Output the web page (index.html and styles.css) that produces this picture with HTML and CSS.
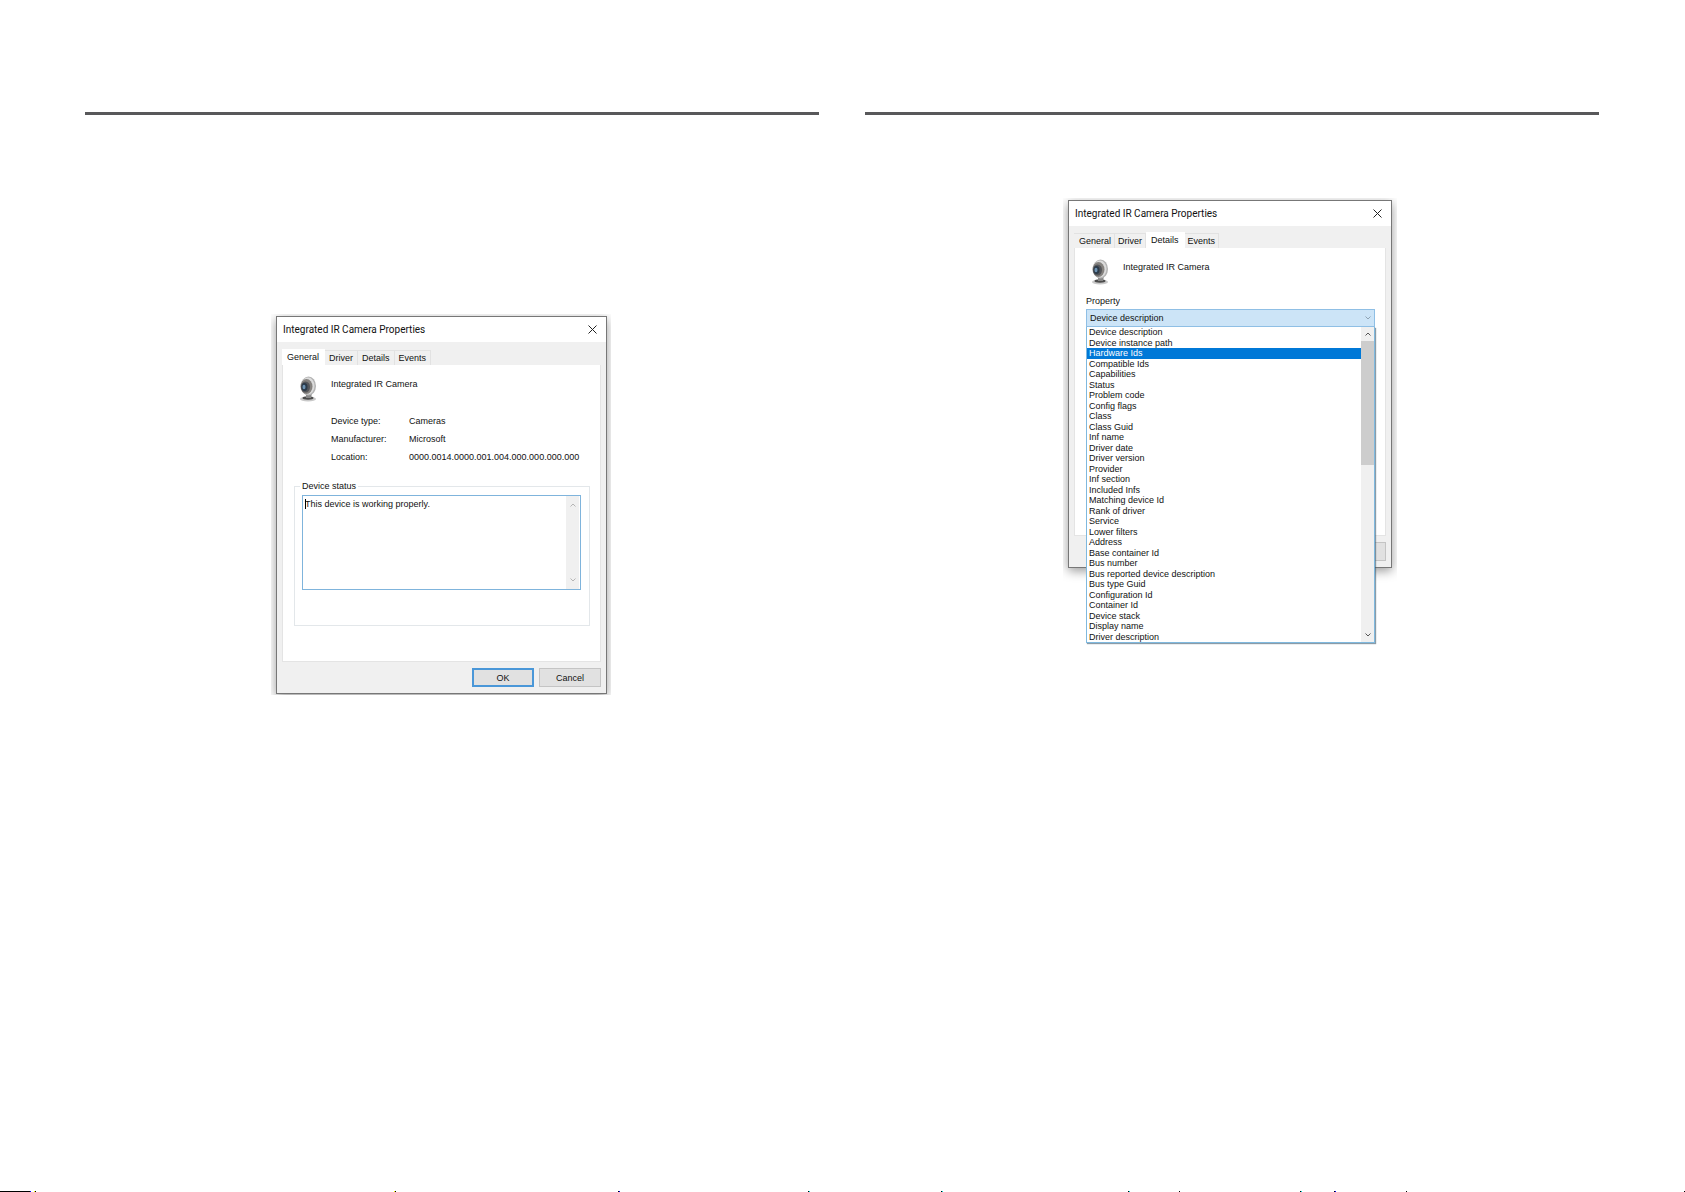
FILE: index.html
```
<!DOCTYPE html>
<html lang="en">
<head>
  <meta charset="utf-8">
  <title>Integrated IR Camera Properties</title>
  <link rel="stylesheet" href="styles.css">
</head>
<body>
<!-- one camera drawing, used in both dialogs -->
<svg class="defs" width="0" height="0" aria-hidden="true">
  <symbol id="camera" viewBox="0 0 18 26">
    <ellipse cx="9" cy="23" rx="8" ry="2.5" fill="#c9c9c9"/>
    <ellipse cx="9" cy="22" rx="5.5" ry="1.7" fill="#4c4c4c"/>
    <path d="M7 17h6l-1 5H7z" fill="#888"/>
    <ellipse cx="9.5" cy="10" rx="7.500" ry="9.5" fill="#b4b4b4"/>
    <ellipse cx="9" cy="10" rx="6.500" ry="8.500" fill="#dcdcdc"/>
    <ellipse cx="7.500" cy="10.500" rx="6" ry="7.500" fill="#85827f"/>
    <ellipse cx="6.500" cy="11" rx="4.500" ry="5.500" fill="#55565a"/>
    <ellipse cx="5.500" cy="11" rx="3" ry="4" fill="#2c3b4a"/>
    <ellipse cx="5" cy="11" rx="1.500" ry="2.200" fill="#6f93b2"/>
  </symbol>
  <symbol id="close" viewBox="0 0 9 9">
    <path d="M.5.5l8 8M8.500.5l-8 8" fill="none" stroke="#222" stroke-width="1"/>
  </symbol>
  <symbol id="up" viewBox="0 0 6 4">
    <path d="M.5 3.500L3 1l2.500 2.500" fill="none" stroke="currentColor"/>
  </symbol>
  <symbol id="down" viewBox="0 0 6 4">
    <path d="M.5.5L3 3 5.500.5" fill="none" stroke="currentColor"/>
  </symbol>
</svg>

<main class="spread">
  <section class="page">
    <div class="figure figure-general">
      <div class="dialog">
        <header class="titlebar">
          <h2>Integrated IR Camera Properties</h2>
          <button class="close" aria-label="Close"><svg><use href="#close"/></svg></button>
        </header>
        <nav class="tabs">
          <button class="tab active">General</button>
          <button class="tab">Driver</button>
          <button class="tab">Details</button>
          <button class="tab">Events</button>
        </nav>
        <div class="panel">
          <div class="device">
            <svg class="camera"><use href="#camera"/></svg>
            <span>Integrated IR Camera</span>
          </div>
          <dl class="info">
            <dt>Device type:</dt><dd>Cameras</dd>
            <dt>Manufacturer:</dt><dd>Microsoft</dd>
            <dt>Location:</dt><dd>0000.0014.0000.001.004.000.000.000.000</dd>
          </dl>
          <fieldset class="status">
            <legend><label for="status">Device status</label></legend>
            <div class="status-box">
              <textarea id="status" readonly>This device is working properly.</textarea>
              <span class="caret"></span>
              <div class="scrollbar disabled">
                <svg><use href="#up"/></svg>
                <svg><use href="#down"/></svg>
              </div>
            </div>
          </fieldset>
        </div>
        <footer class="actions">
          <button class="btn default">OK</button>
          <button class="btn">Cancel</button>
        </footer>
      </div>
    </div>
  </section>

  <section class="page">
    <div class="figure figure-details">
      <div class="dialog">
        <header class="titlebar">
          <h2>Integrated IR Camera Properties</h2>
          <button class="close" aria-label="Close"><svg><use href="#close"/></svg></button>
        </header>
        <nav class="tabs">
          <button class="tab">General</button>
          <button class="tab">Driver</button>
          <button class="tab active">Details</button>
          <button class="tab">Events</button>
        </nav>
        <div class="panel">
          <div class="device">
            <svg class="camera"><use href="#camera"/></svg>
            <span>Integrated IR Camera</span>
          </div>
          <label class="property-label" for="property">Property</label>
          <div class="combo">
            <select id="property">
              <option>Device description</option>
            </select>
            <svg class="combo-arrow"><use href="#down"/></svg>
            <!-- opened drop-down -->
            <div class="dropdown">
              <ul role="listbox" aria-label="Property">
                <li role="option">Device description</li>
                <li role="option">Device instance path</li>
                <li role="option" class="selected" aria-selected="true">Hardware Ids</li>
                <li role="option">Compatible Ids</li>
                <li role="option">Capabilities</li>
                <li role="option">Status</li>
                <li role="option">Problem code</li>
                <li role="option">Config flags</li>
                <li role="option">Class</li>
                <li role="option">Class Guid</li>
                <li role="option">Inf name</li>
                <li role="option">Driver date</li>
                <li role="option">Driver version</li>
                <li role="option">Provider</li>
                <li role="option">Inf section</li>
                <li role="option">Included Infs</li>
                <li role="option">Matching device Id</li>
                <li role="option">Rank of driver</li>
                <li role="option">Service</li>
                <li role="option">Lower filters</li>
                <li role="option">Address</li>
                <li role="option">Base container Id</li>
                <li role="option">Bus number</li>
                <li role="option">Bus reported device description</li>
                <li role="option">Bus type Guid</li>
                <li role="option">Configuration Id</li>
                <li role="option">Container Id</li>
                <li role="option">Device stack</li>
                <li role="option">Display name</li>
                <li role="option">Driver description</li>
              </ul>
              <div class="scrollbar">
                <svg><use href="#up"/></svg>
                <span class="thumb"></span>
                <svg><use href="#down"/></svg>
              </div>
            </div>
          </div>
          <div class="value-box"></div>
        </div>
        <footer class="actions">
          <button class="btn" aria-label="Cancel"></button>
        </footer>
      </div>
    </div>
  </section>
</main>

<!-- trim line and ticks along the bottom of the sheet -->
<svg class="edge" viewBox="0 0 1685 1" preserveAspectRatio="none" aria-hidden="true">
  <path d="M0 0h30v1H0zM35 0h1v1h-1zM395 0h1v1h-1zM618 0h1v1h-1zM808 0h1v1h-1zM941 0h1v1h-1zM1128 0h1v1h-1zM1179 0h1v1h-1zM1300 0h1v1h-1zM1334 0h1v1h-1zM1406 0h1v1h-1zM1684 0h1v1h-1z"/>
  <path d="M30 0h1v1h-1zM619 0h1v1h-1zM1335 0h1v1h-1z" fill="#00f"/>
  <path d="M34 0h1v1h-1zM394 0h1v1h-1z" fill="#ff0"/>
  <path d="M809 0h1v1h-1zM942 0h1v1h-1zM1129 0h1v1h-1zM1301 0h1v1h-1z" fill="#0dd"/>
</svg>
</body>
</html>
```
FILE: styles.css
```
*{
  box-sizing: border-box;
}

body{
  margin: 0;
  min-height: 100vh;
  display: flex;
  flex-direction: column;
  background: #fff;
  color: #111;
  font: 9px/12px "Liberation Sans", Arial, sans-serif;
}

button,
select,
textarea{
  font: inherit;
  color: inherit;
  border-radius: 0;
}

.defs{
  position: absolute;
}

/* Two facing pages */
.spread{
  flex: 1;
  display: grid;
  grid-template-columns: 1fr 1fr;
  gap: 46px;
  padding: 112px 86px 0 85px;
}
.page{
  border-top: 3px solid #58585a;
}

/* The figures cut the dialog shadow off at their edge */
.figure{
  overflow: hidden;
}
.figure-general{
  width: 340px;
  margin: 199px 0 0 186px;
  padding: 2px 4px 1px 5px;
}
.figure-details{
  width: 334px;
  margin: 83px 0 0 198px;
  padding: 2px 5px 90px;
}

.dialog{
  display: flex;
  flex-direction: column;
  background: #f0f0f0;
  border: 1px solid #777;
  box-shadow: 0 3px 10px rgba(0,0,0,0.4);
}
.figure-general .dialog{
  height: 378px;
}
.figure-details .dialog{
  height: 368px;
}

.titlebar{
  display: flex;
  align-items: center;
  justify-content: space-between;
  height: 25px;
  padding: 0 9px 0 6px;
  background: #fff;
}
.titlebar h2{
  margin: 0;
  font: 10px/14px Roboto, "Open Sans", sans-serif;
}
.close{
  display: flex;
  padding: 0;
  border: 0;
  background: none;
}
.close svg{
  width: 9px;
  height: 9px;
}

/* Tabs */
.tabs{
  display: flex;
  align-items: flex-end;
  margin-top: 7px;
  padding: 0 5px;
}
.figure-details .tabs{
  margin-top: 6px;
}
.tab{
  height: 15px;
  padding: 0 4px;
  border: 1px solid #e2e2e2;
  border-width: 1px 1px 0 0;
  background: #f0f0f0;
  line-height: 14px;
}
.figure-details .tab{
  padding: 0 3px;
}
.figure-details .tab:first-child{
  padding-left: 5px;
}
.tab.active,
.figure-details .tab.active{
  height: 16px;
  padding: 0 5px 2px;
  background: #fff;
  border-color: #fff;
}

.panel{
  flex: 1;
  margin: 0 5px;
  padding: 11px 10px 0 11px;
  border: 1px solid #e4e4e4;
  border-top: 0;
  background: #fff;
}
.device{
  display: flex;
  gap: 14px;
  padding-left: 5px;
}
.device span{
  padding-top: 2px;
}
.camera{
  width: 18px;
  height: 26px;
}

.info{
  display: grid;
  grid-template-columns: 78px auto;
  line-height: 18px;
  margin: 10px 0 0 37px;
}
.info dd{
  margin: 0;
}

.status{
  margin: 14px 0 0;
  padding: 3px 8px 35px 7px;
  border: 1px solid #e3e7ea;
}
.status legend{
  margin-left: -2px;
  padding: 0 2px;
}
.status-box{
  position: relative;
  display: flex;
  height: 95px;
  padding-right: 1px;
  border: 1px solid #7fb4dc;
}
.status textarea{
  flex: 1;
  padding: 2px;
  border: 0;
  outline: 0;
  resize: none;
  overflow: hidden;
}
.caret{
  position: absolute;
  left: 2px;
  top: 3px;
  width: 1px;
  height: 10px;
  background: #000;
}

.scrollbar{
  display: flex;
  flex-direction: column;
  align-items: center;
  justify-content: space-between;
  width: 13px;
  padding: 5px 0;
  background: #f0f0f0;
  color: #555;
}
.scrollbar svg{
  width: 6px;
  height: 4px;
}
.scrollbar.disabled{
  padding: 7px 0;
  color: #b5b5b5;
}

.actions{
  display: flex;
  justify-content: flex-end;
  gap: 5px;
  padding: 6px 5px;
}
.btn{
  width: 62px;
  height: 19px;
  padding: 0;
  border: 1px solid #c4c4c4;
  background: #e1e1e1;
}
.btn.default{
  border: 2px solid #4a97d8;
}

/* Details tab */
.property-label{
  display: block;
  margin-top: 10px;
}
.combo{
  position: relative;
  margin-top: 2px;
}
.combo select{
  display: block;
  appearance: none;
  width: 100%;
  height: 18px;
  padding: 0 3px;
  border: 1px solid #8fbfe5;
  background: #cce4f7;
}
.combo-arrow{
  position: absolute;
  right: 4px;
  top: 7px;
  width: 6px;
  height: 4px;
  color: #8fa3b3;
}
.dropdown{
  position: absolute;
  top: 18px;
  left: 0;
  right: 0;
  z-index: 1;
  display: flex;
  height: 316px;
  border: 1px solid #7fb9df;
  border-top: 0;
  background: #fff;
  box-shadow: 1px 1px 1px rgba(60,90,110,0.6);
}
/* 30 equal rows fill the list */
.dropdown ul{
  flex: 1;
  display: grid;
  grid-auto-rows: 1fr;
  margin: 0;
  padding: 0;
  list-style: none;
  line-height: 10px;
}
.dropdown li{
  padding-left: 2px;
}
.dropdown .selected{
  background: #0078d7;
  color: #fff;
}
.dropdown .thumb{
  width: 100%;
  height: 124px;
  margin: 5px 0 auto;
  background: #cdcdcd;
}
.value-box{
  height: 197px;
  margin-top: 1px;
  border: 1px solid #7a9cb8;
}

.edge{
  display: block;
  width: 100%;
  height: 1px;
}
```
